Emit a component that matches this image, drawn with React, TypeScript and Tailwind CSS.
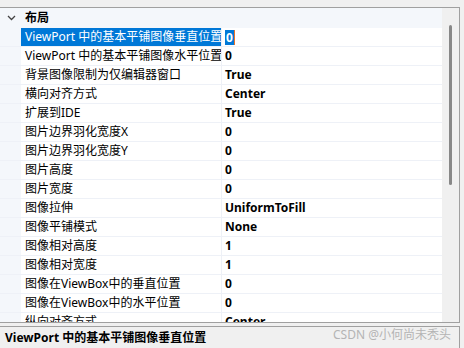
const rows: [string, string][] = [
  ["ViewPort 中的基本平铺图像水平位置", "0"],
  ["背景图像限制为仅编辑器窗口", "True"],
  ["横向对齐方式", "Center"],
  ["扩展到IDE", "True"],
  ["图片边界羽化宽度X", "0"],
  ["图片边界羽化宽度Y", "0"],
  ["图片高度", "0"],
  ["图片宽度", "0"],
  ["图像拉伸", "UniformToFill"],
  ["图像平铺模式", "None"],
  ["图像相对高度", "1"],
  ["图像相对宽度", "1"],
  ["图像在ViewBox中的垂直位置", "0"],
  ["图像在ViewBox中的水平位置", "0"],
  ["纵向对齐方式", "Center"],
];

export default function App() {
  return (
    <div className="relative w-[464px] h-[348px] overflow-hidden bg-[#f0f0f0] pt-[7px] text-[12px] text-black font-['Noto_Sans','Noto_Sans_CJK_SC',sans-serif]">
      {/* Property grid */}
      <div className="flex w-[460px] h-[316px] border-t border-b border-r border-[#a0a0a0]">
        <div className="flex-1 overflow-hidden bg-white">
          {/* Category header */}
          <div className="flex items-center h-[20px] bg-[#f4f7fb]">
            <div className="w-[21px] flex justify-center">
              <svg width="9" height="6" viewBox="0 0 9 6" className="ml-[1px]">
                <path d="M1 1 L4.5 4.5 L8 1" fill="none" stroke="#444" strokeWidth="1.3" />
              </svg>
            </div>
            <span className="pl-[4px] font-bold">布局</span>
          </div>

          {/* Selected row */}
          <div className="flex h-[19px] border-b border-[#eef1f7]">
            <div className="w-[21px] shrink-0 bg-[#f4f7fb]" />
            <div className="w-[200px] shrink-0 flex items-center pl-[4px] bg-[#0078d7] text-white whitespace-nowrap overflow-hidden">
              ViewPort 中的基本平铺图像垂直位置
            </div>
            <div className="flex-1 flex items-center pl-[3px] border-l border-[#eef1f7]">
              <span className="bg-[#0078d7] text-white font-bold px-[1px] leading-[15px]">0</span>
              <span className="w-[1px] h-[15px] bg-[#e8742a]" />
            </div>
          </div>

          {rows.map(([name, value]) => (
            <div key={name} className="flex h-[19px] border-b border-[#eef1f7]">
              <div className="w-[21px] shrink-0 bg-[#f4f7fb]" />
              <div className="w-[200px] shrink-0 flex items-center pl-[4px] whitespace-nowrap overflow-hidden">
                {name}
              </div>
              <div className="flex-1 flex items-center pl-[3px] border-l border-[#eef1f7] font-bold">
                {value}
              </div>
            </div>
          ))}
        </div>

        {/* Scrollbar */}
        <div className="w-[17px] bg-[#f0f0f0] flex justify-center pt-[17px]">
          <div className="w-[3px] h-[160px] bg-[#888888] rounded-full" />
        </div>
      </div>

      {/* Description */}
      <div className="mt-[3px] w-[460px] h-[22px] border-t border-r border-[#a0a0a0] flex items-center pl-[5px] font-bold">
        ViewPort 中的基本平铺图像垂直位置
      </div>

      <div className="absolute left-[333px] top-[326px] text-[12px] text-[#b4b4b4]">
        CSDN @小何尚未秃头
      </div>
    </div>
  );
}
